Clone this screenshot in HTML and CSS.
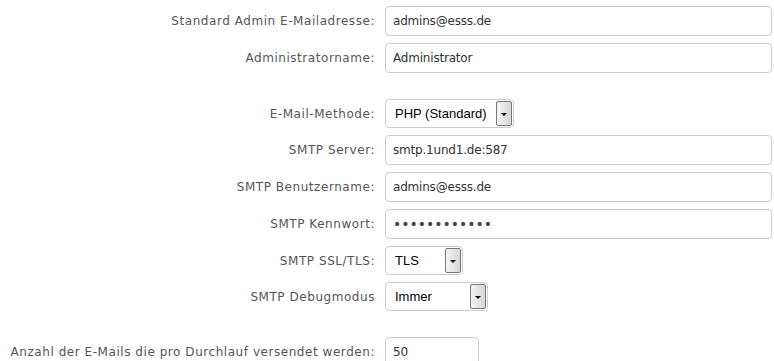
FILE: index.html
```html
<!DOCTYPE html>
<html lang="de">
<head>
    <meta charset="UTF-8">
    <title>E-Mail Einstellungen</title>
    <link rel="stylesheet" href="styles.css">
</head>
<body>
    <form class="settings">
        <label class="label">Standard Admin E-Mailadresse:</label>
        <div class="field"><input class="text" type="text" value="admins@esss.de"></div>

        <label class="label">Administratorname:</label>
        <div class="field"><input class="text" type="text" value="Administrator"></div>

        <label class="label spaced">E-Mail-Methode:</label>
        <div class="field spaced">
            <div class="select select-method"><span>PHP (Standard)</span><span class="arrow"></span></div>
        </div>

        <label class="label">SMTP Server:</label>
        <div class="field"><input class="text" type="text" value="smtp.1und1.de:587"></div>

        <label class="label">SMTP Benutzername:</label>
        <div class="field"><input class="text" type="text" value="admins@esss.de"></div>

        <label class="label">SMTP Kennwort:</label>
        <div class="field"><input class="text password" type="password" value="geheimpasswo"></div>

        <label class="label">SMTP SSL/TLS:</label>
        <div class="field">
            <div class="select select-tls"><span>TLS</span><span class="arrow"></span></div>
        </div>

        <label class="label">SMTP Debugmodus</label>
        <div class="field">
            <div class="select select-debug"><span>Immer</span><span class="arrow"></span></div>
        </div>

        <label class="label spaced">Anzahl der E-Mails die pro Durchlauf versendet werden:</label>
        <div class="field spaced"><input class="text short" type="text" value="50"></div>
    </form>
</body>
</html>
```

FILE: styles.css
```css
body {
    margin: 0;
    padding: 6px 2px 0 0;
    background: #fff;
    font-family: 'DejaVu Sans', Verdana, sans-serif;
    font-size: 12px;
    overflow: hidden;
}

.settings {
    display: grid;
    grid-template-columns: 375px 1fr;
    column-gap: 10px;
    row-gap: 7px;
    align-items: center;
}

.label {
    text-align: right;
    color: #555;
    letter-spacing: 0.55px;
    white-space: nowrap;
}

.spaced {
    margin-top: 19px;
}

.field {
    display: flex;
}

.text {
    box-sizing: border-box;
    width: 100%;
    height: 30px;
    margin: 0;
    padding: 0 7px;
    border: 1px solid #ccc;
    border-radius: 4px;
    background: #fff;
    color: #333;
    font-family: 'DejaVu Sans', Tahoma, sans-serif;
    font-size: 12px;
    letter-spacing: -0.2px;
    outline: none;
}

.password {
    font-size: 14px;
    letter-spacing: 0;
    color: #444;
}

.short {
    width: 94px;
}

.select {
    box-sizing: border-box;
    height: 29px;
    display: flex;
    align-items: center;
    justify-content: space-between;
    padding: 1px 1px 1px 9px;
    border: 1px solid #ccc;
    border-radius: 4px;
    background: #fff;
    color: #000;
    font-family: 'Liberation Sans', Arial, sans-serif;
    font-size: 13px;
}

.select-method { width: 129px; }
.select-tls { width: 78px; }
.select-debug { width: 103px; }

.arrow {
    position: relative;
    box-sizing: border-box;
    width: 16px;
    height: 100%;
    border: 1px solid #777;
    border-radius: 2px;
    background: linear-gradient(to right, #f4f4f4, #d6d6d6);
}

.arrow::after {
    content: "";
    position: absolute;
    left: 4px;
    top: 11px;
    border-left: 3px solid transparent;
    border-right: 3px solid transparent;
    border-top: 3px solid #000;
}
```
